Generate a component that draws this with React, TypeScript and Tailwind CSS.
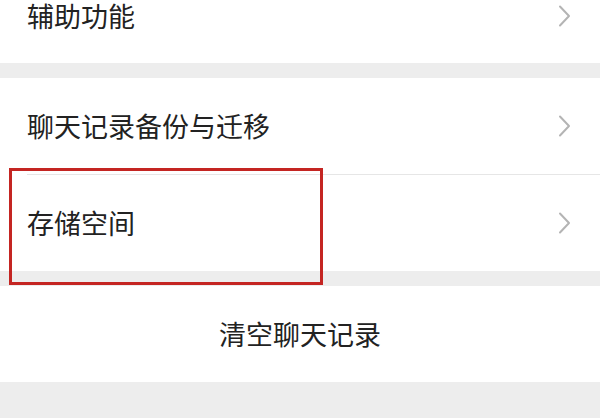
import { ReactNode } from 'react'

function Chevron() {
  return (
    <svg width="13" height="22" viewBox="0 0 13 22" className="shrink-0">
      <path d="M2 1.5 L11 11 L2 20.5" fill="none" stroke="#b4b4b4" strokeWidth="2" strokeLinecap="round" strokeLinejoin="round" />
    </svg>
  )
}

function Row({ children, className = 'h-[96px] items-center' }: { children: ReactNode; className?: string }) {
  return (
    <div className={`flex justify-between pl-[27px] pr-[29px] bg-white ${className}`}>
      <span className="text-[27px] leading-[30px] text-[#222]">{children}</span>
      <Chevron />
    </div>
  )
}

export default function App() {
  return (
    <div
      className="w-[600px] h-[418px] overflow-hidden bg-[#ededed]"
      style={{ fontFamily: '"Noto Sans CJK SC", "Noto Sans", sans-serif' }}
    >
      {/* 辅助功能 (row scrolled partly off the top) */}
      <Row className="h-[63px] items-start pt-[1px] [&>svg]:mt-[4px]">辅助功能</Row>

      <div className="h-[15px]" />

      <Row>聊天记录备份与迁移</Row>
      <div className="bg-white pl-[27px]">
        <div className="h-px bg-[#e6e6e6]" />
      </div>
      <div className="relative">
        <Row>存储空间</Row>
        {/* highlight box */}
        <div className="absolute left-[9px] top-[-7px] w-[314px] h-[117px] border-[3px] border-[#c42522] pointer-events-none" />
      </div>

      <div className="h-[15px]" />

      <div className="h-[96px] bg-white flex items-center justify-center">
        <span className="text-[27px] leading-[30px] text-[#222]">清空聊天记录</span>
      </div>
    </div>
  )
}
